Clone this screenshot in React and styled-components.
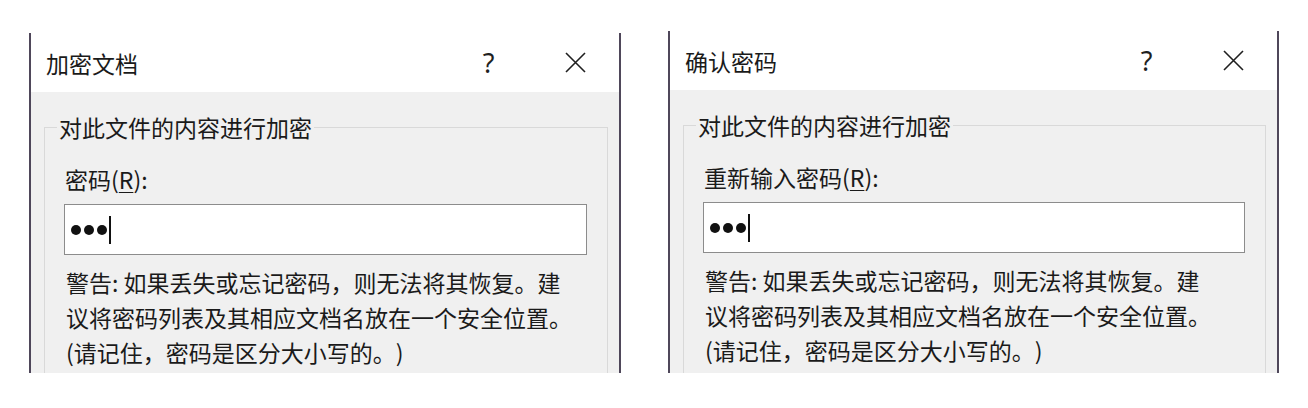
import styled, { createGlobalStyle } from "styled-components";

const GlobalStyle = createGlobalStyle`
  html, body {
    margin: 0;
    padding: 0;
    background: #ffffff;
  }
  body {
    font-family: "Noto Sans CJK SC", "Noto Sans", sans-serif;
    color: #141414;
    text-spacing-trim: space-all;
  }
`;

const Page = styled.div`
  display: flex;
  align-items: flex-end;
  gap: 47px;
  height: 373px;
  padding-left: 29px;
`;

const Dialog = styled.div`
  width: ${ ({ $width }) => $width }px;
  height: ${ ({ $height }) => $height }px;
  box-sizing: border-box;
  display: flex;
  flex-direction: column;
  background: #f0f0f0;
  border-left: 2px solid #4f475a;
  border-right: 2px solid #4f475a;
  overflow: hidden;
`;

const TitleBar = styled.div`
  height: 59px;
  flex: none;
  display: flex;
  align-items: center;
  background: #ffffff;
  padding-left: 15px;
`;

const Title = styled.div`
  flex: 1;
  font-size: 23px;
  line-height: 30px;
  color: #1a1a1a;
`;

const TitleButton = styled.div`
  width: 87px;
  height: 59px;
  display: flex;
  align-items: center;
  justify-content: center;
  font-family: "Noto Sans", "Liberation Sans", sans-serif;
  font-size: 27px;
  color: #1f1f1f;
`;

const Body = styled.div`
  flex: 1;
  padding: 20px 11px 0 13px;
`;

const Group = styled.fieldset`
  margin: 0;
  padding: 0;
  height: 100%;
  border: 1px solid #d9d9d9;
  border-bottom: none;
  min-width: 0;
`;

const Legend = styled.legend`
  margin-left: 12px;
  padding: 0 2px;
  font-size: 23px;
  line-height: 30px;
  color: #1a1a1a;
`;

const Content = styled.div`
  padding: 22px 20px 0 19px;
`;

const Label = styled.div`
  padding-left: 1px;
  font-size: 23px;
  line-height: 30px;
  color: #1a1a1a;

  u {
    text-decoration-thickness: 1px;
    text-underline-offset: 3px;
  }
`;

const PasswordBox = styled.div`
  margin-top: 10px;
  height: 51px;
  box-sizing: border-box;
  display: flex;
  align-items: center;
  gap: 3px;
  padding-left: 6px;
  background: #ffffff;
  border: 1px solid #8c8c8c;
`;

const Dot = styled.span`
  width: 10px;
  height: 10px;
  border-radius: 50%;
  background: #111;
`;

const Caret = styled.span`
  width: 2px;
  height: 28px;
  margin-left: -1px;
  background: #111;
`;

const Warning = styled.div`
  margin-top: 10px;
  padding-left: 2px;
  font-size: 23px;
  line-height: 35px;
  color: #1a1a1a;
  white-space: nowrap;
`;

const CloseIcon = () => (
  <svg width="21" height="21" viewBox="0 0 21 21">
    <path d="M1 1 L20 20 M20 1 L1 20" stroke="#1f1f1f" strokeWidth="1.6" fill="none" />
  </svg>
);

const PasswordDialog = ({ title, label, width, height }) => (
  <Dialog $width={ width } $height={ height }>
    <TitleBar>
      <Title>{ title }</Title>
      <TitleButton>?</TitleButton>
      <TitleButton><CloseIcon /></TitleButton>
    </TitleBar>
    <Body>
      <Group>
        <Legend>对此文件的内容进行加密</Legend>
        <Content>
          <Label>{ label }(<u>R</u>):</Label>
          <PasswordBox>
            <Dot /><Dot /><Dot />
            <Caret />
          </PasswordBox>
          <Warning>
            <div>警告: 如果丢失或忘记密码，则无法将其恢复。建</div>
            <div>议将密码列表及其相应文档名放在一个安全位置。</div>
            <div>(请记住，密码是区分大小写的。)</div>
          </Warning>
        </Content>
      </Group>
    </Body>
  </Dialog>
);

const App = () => (
  <>
    <GlobalStyle />
    <Page>
      <PasswordDialog title="加密文档" label="密码" width={ 592 } height={ 340 } />
      <PasswordDialog title="确认密码" label="重新输入密码" width={ 611 } height={ 342 } />
    </Page>
  </>
);

export default App;
